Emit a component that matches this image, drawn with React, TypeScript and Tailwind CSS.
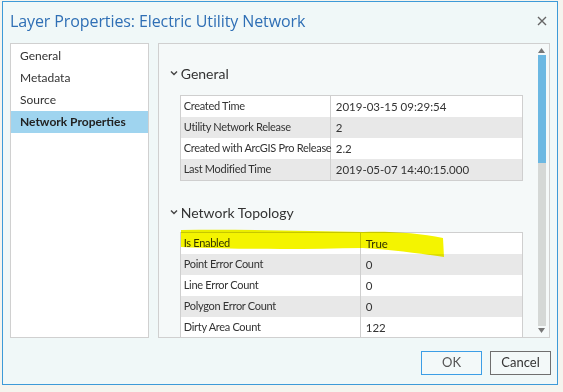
import React from 'react';

const generalRows = [
  ['Created Time', '2019-03-15 09:29:54'],
  ['Utility Network Release', '2'],
  ['Created with ArcGIS Pro Release', '2.2'],
  ['Last Modified Time', '2019-05-07 14:40:15.000'],
];

const topologyRows = [
  ['Is Enabled', 'True'],
  ['Point Error Count', '0'],
  ['Line Error Count', '0'],
  ['Polygon Error Count', '0'],
  ['Dirty Area Count', '122'],
];

function Chevron() {
  return (
    <svg width="8" height="6" viewBox="0 0 8 6" className="mr-[3px]">
      <path d="M1 1.5 L4 4.5 L7 1.5" stroke="#444" strokeWidth="1.4" fill="none" />
    </svg>
  );
}

function PropTable({ rows, keyWidth }: { rows: string[][]; keyWidth: string }) {
  return (
    <div className="ml-[10px] w-[343px] border border-[#cfcfcf] bg-white text-[11.5px]">
      {rows.map((r, i) => (
        <div
          key={r[0]}
          className={`flex h-[21px] items-center whitespace-nowrap ${i % 2 === 1 ? 'bg-[#e8e8e8]' : 'bg-white'}`}
        >
          <div
            className={`${keyWidth} shrink-0 h-full flex items-center pl-[3px] border-r border-[#cfcfcf] text-[11px] tracking-[-0.3px]`}
          >
            {r[0]}
          </div>
          <div className="pl-[5px]">{r[1]}</div>
        </div>
      ))}
    </div>
  );
}

function App() {
  const navItems = ['General', 'Metadata', 'Source', 'Network Properties'];
  return (
    <div
      className="w-[563px] h-[392px] bg-[#f5f4ee] overflow-hidden text-[#333]"
      style={{ fontFamily: 'Lato, "Open Sans", sans-serif' }}
    >
      <div className="ml-[2px] mt-[1px] w-[556px] h-[384px] border border-[#3d9ad8] bg-[#f0f8f8] flex flex-col">
        <div className="h-[38px] flex items-center justify-between pl-[7px] pr-[10px]">
          <span
            className="text-[16px] text-[#2f6fb5] tracking-[-0.1px]"
            style={{ fontFamily: '"Open Sans", sans-serif' }}
          >
            Layer Properties: Electric Utility Network
          </span>
          <svg width="10" height="10" viewBox="0 0 10 10">
            <path d="M1 1 L9 9 M9 1 L1 9" stroke="#666" strokeWidth="1.4" />
          </svg>
        </div>
        <div className="flex gap-[9px] px-[7px] mt-[3px]">
          <div className="w-[139px] h-[295px] bg-white border border-[#d0d0d0] pt-[1px] text-[12px]">
            {navItems.map((n, i) => (
              <div
                key={n}
                className={`h-[22px] flex items-center pl-[9px] ${i === 3 ? 'bg-[#9fd4ef] font-bold text-[#222]' : ''}`}
              >
                {n}
              </div>
            ))}
          </div>
          <div className="relative w-[393px] h-[295px] bg-[#f5f9f9] border border-[#d0d0d0] flex overflow-hidden">
            <div className="flex-1 pl-[11px]">
              <div className="flex items-center h-[20px] mt-[19px] text-[14px]">
                <Chevron />
                <span>General</span>
              </div>
              <div className="mt-[12px]">
                <PropTable rows={generalRows} keyWidth="w-[150px]" />
              </div>
              <div className="flex items-center h-[20px] mt-[21px] text-[14px]">
                <Chevron />
                <span>Network Topology</span>
              </div>
              <div className="mt-[10px]">
                <PropTable rows={topologyRows} keyWidth="w-[180px]" />
              </div>
              <svg
                className="absolute left-0 top-0 mix-blend-multiply pointer-events-none"
                width="393"
                height="295"
              >
                <path
                  d="M22 186 C 80 185, 150 187, 204 188 C 230 187, 260 189, 284 194 L 285 213 C 265 210, 235 206, 204 204 C 150 205, 100 206, 22 203 Z"
                  fill="#f4f400"
                />
              </svg>
            </div>
            <div className="w-[9px] mr-[3px] mt-[3px] mb-[3px] flex flex-col items-center">
              <svg width="9" height="7" viewBox="0 0 9 7">
                <path d="M4.5 1 L8 6 L1 6 Z" fill="#777" />
              </svg>
              <div className="w-[8px] flex-1 flex flex-col mt-[1px] mb-[1px]">
                <div className="h-[108px] bg-[#6cb8e2]" />
                <div className="flex-1 bg-[#d5d8d6]" />
              </div>
              <svg width="9" height="7" viewBox="0 0 9 7">
                <path d="M1 1 L8 1 L4.5 6 Z" fill="#777" />
              </svg>
            </div>
          </div>
        </div>
        <div className="flex justify-end gap-[8px] pr-[6px] mt-[13px] text-[13px]">
          <button className="w-[61px] h-[24px] border border-[#3c9ee6] bg-[#f3f9f9] text-[#555]">OK</button>
          <button className="w-[61px] h-[24px] border border-[#6f6f6f] bg-[#f3f9f9] text-[#333]">Cancel</button>
        </div>
      </div>
    </div>
  );
}

export default App;
